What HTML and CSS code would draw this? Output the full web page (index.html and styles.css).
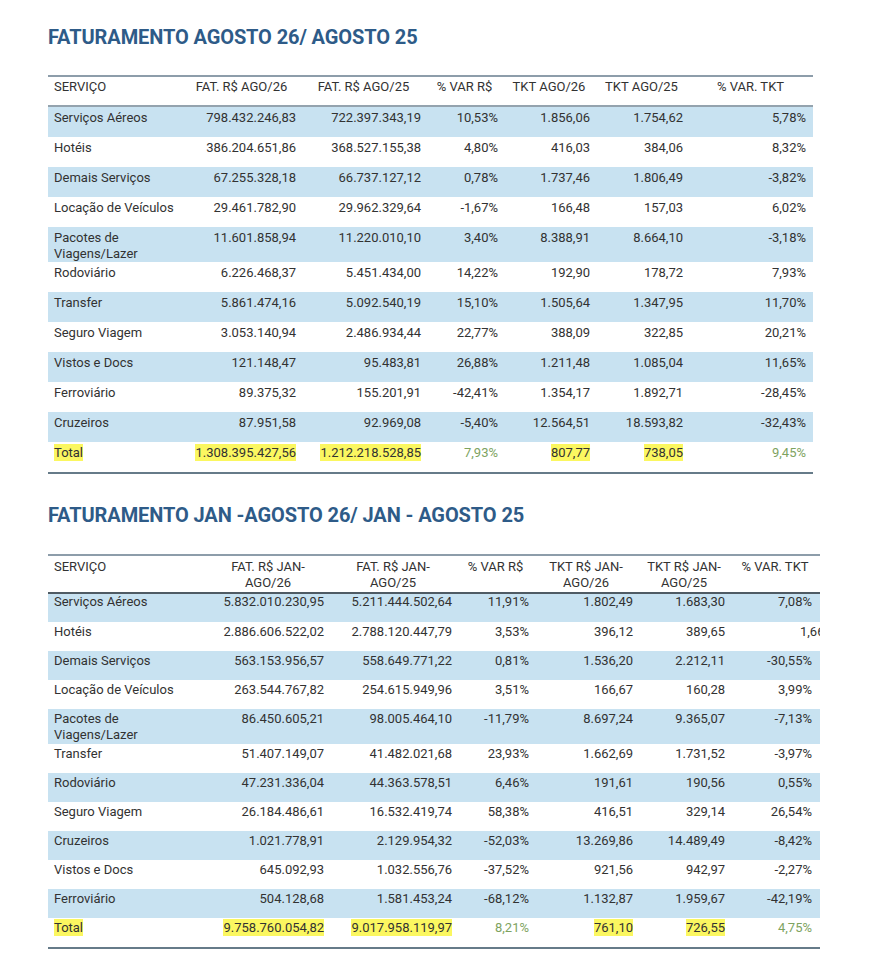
FILE: index.html
```html
<!DOCTYPE html>
<html lang="pt-BR">
<head>
<meta charset="utf-8">
<title>Faturamento</title>
<link rel="stylesheet" href="styles.css">
</head>
<body>
<main class="page">
  <section class="report report-month">
    <h1 class="title">FATURAMENTO AGOSTO 26/ AGOSTO 25</h1>
    <table class="grid grid-month">
      <colgroup>
        <col class="w-134"><col class="w-119"><col class="w-125"><col class="w-77"><col class="w-92"><col class="w-93"><col class="w-125">
      </colgroup>
      <thead>
        <tr><th class="lbl">SERVIÇO</th><th>FAT. R$ AGO/26</th><th>FAT. R$ AGO/25</th><th>% VAR R$</th><th>TKT AGO/26</th><th>TKT AGO/25</th><th>% VAR. TKT</th></tr>
      </thead>
      <tbody>
        <tr class="alt"><td class="lbl">Serviços Aéreos</td><td>798.432.246,83</td><td>722.397.343,19</td><td>10,53%</td><td>1.856,06</td><td>1.754,62</td><td>5,78%</td></tr>
        <tr><td class="lbl">Hotéis</td><td>386.204.651,86</td><td>368.527.155,38</td><td>4,80%</td><td>416,03</td><td>384,06</td><td>8,32%</td></tr>
        <tr class="alt"><td class="lbl">Demais Serviços</td><td>67.255.328,18</td><td>66.737.127,12</td><td>0,78%</td><td>1.737,46</td><td>1.806,49</td><td>-3,82%</td></tr>
        <tr><td class="lbl">Locação de Veículos</td><td>29.461.782,90</td><td>29.962.329,64</td><td>-1,67%</td><td>166,48</td><td>157,03</td><td>6,02%</td></tr>
        <tr class="alt"><td class="lbl">Pacotes de<br>Viagens/Lazer</td><td>11.601.858,94</td><td>11.220.010,10</td><td>3,40%</td><td>8.388,91</td><td>8.664,10</td><td>-3,18%</td></tr>
        <tr><td class="lbl">Rodoviário</td><td>6.226.468,37</td><td>5.451.434,00</td><td>14,22%</td><td>192,90</td><td>178,72</td><td>7,93%</td></tr>
        <tr class="alt"><td class="lbl">Transfer</td><td>5.861.474,16</td><td>5.092.540,19</td><td>15,10%</td><td>1.505,64</td><td>1.347,95</td><td>11,70%</td></tr>
        <tr><td class="lbl">Seguro Viagem</td><td>3.053.140,94</td><td>2.486.934,44</td><td>22,77%</td><td>388,09</td><td>322,85</td><td>20,21%</td></tr>
        <tr class="alt"><td class="lbl">Vistos e Docs</td><td>121.148,47</td><td>95.483,81</td><td>26,88%</td><td>1.211,48</td><td>1.085,04</td><td>11,65%</td></tr>
        <tr><td class="lbl">Ferroviário</td><td>89.375,32</td><td>155.201,91</td><td>-42,41%</td><td>1.354,17</td><td>1.892,71</td><td>-28,45%</td></tr>
        <tr class="alt"><td class="lbl">Cruzeiros</td><td>87.951,58</td><td>92.969,08</td><td>-5,40%</td><td>12.564,51</td><td>18.593,82</td><td>-32,43%</td></tr>
        <tr class="total"><td class="lbl"><span class="hl">Total</span></td><td><span class="hl">1.308.395.427,56</span></td><td><span class="hl">1.212.218.528,85</span></td><td class="pct">7,93%</td><td><span class="hl">807,77</span></td><td><span class="hl">738,05</span></td><td class="pct">9,45%</td></tr>
      </tbody>
    </table>
  </section>

  <section class="report report-ytd">
    <h1 class="title">FATURAMENTO JAN -AGOSTO 26/ JAN - AGOSTO 25</h1>
    <table class="grid grid-ytd">
      <colgroup>
        <col class="w-159"><col class="w-122"><col class="w-128"><col class="w-77"><col class="w-104"><col class="w-92"><col class="w-90">
      </colgroup>
      <thead>
        <tr><th class="lbl">SERVIÇO</th><th>FAT. R$ JAN-<br>AGO/26</th><th>FAT. R$ JAN-<br>AGO/25</th><th>% VAR R$</th><th>TKT R$ JAN-<br>AGO/26</th><th>TKT R$ JAN-<br>AGO/25</th><th>% VAR. TKT</th></tr>
      </thead>
      <tbody>
        <tr class="alt"><td class="lbl">Serviços Aéreos</td><td>5.832.010.230,95</td><td>5.211.444.502,64</td><td>11,91%</td><td>1.802,49</td><td>1.683,30</td><td>7,08%</td></tr>
        <tr><td class="lbl">Hotéis</td><td>2.886.606.522,02</td><td>2.788.120.447,79</td><td>3,53%</td><td>396,12</td><td>389,65</td><td class="cut"><div class="clip">1,66%</div></td></tr>
        <tr class="alt"><td class="lbl">Demais Serviços</td><td>563.153.956,57</td><td>558.649.771,22</td><td>0,81%</td><td>1.536,20</td><td>2.212,11</td><td>-30,55%</td></tr>
        <tr><td class="lbl">Locação de Veículos</td><td>263.544.767,82</td><td>254.615.949,96</td><td>3,51%</td><td>166,67</td><td>160,28</td><td>3,99%</td></tr>
        <tr class="alt"><td class="lbl">Pacotes de<br>Viagens/Lazer</td><td>86.450.605,21</td><td>98.005.464,10</td><td>-11,79%</td><td>8.697,24</td><td>9.365,07</td><td>-7,13%</td></tr>
        <tr><td class="lbl">Transfer</td><td>51.407.149,07</td><td>41.482.021,68</td><td>23,93%</td><td>1.662,69</td><td>1.731,52</td><td>-3,97%</td></tr>
        <tr class="alt"><td class="lbl">Rodoviário</td><td>47.231.336,04</td><td>44.363.578,51</td><td>6,46%</td><td>191,61</td><td>190,56</td><td>0,55%</td></tr>
        <tr><td class="lbl">Seguro Viagem</td><td>26.184.486,61</td><td>16.532.419,74</td><td>58,38%</td><td>416,51</td><td>329,14</td><td>26,54%</td></tr>
        <tr class="alt"><td class="lbl">Cruzeiros</td><td>1.021.778,91</td><td>2.129.954,32</td><td>-52,03%</td><td>13.269,86</td><td>14.489,49</td><td>-8,42%</td></tr>
        <tr><td class="lbl">Vistos e Docs</td><td>645.092,93</td><td>1.032.556,76</td><td>-37,52%</td><td>921,56</td><td>942,97</td><td>-2,27%</td></tr>
        <tr class="alt"><td class="lbl">Ferroviário</td><td>504.128,68</td><td>1.581.453,24</td><td>-68,12%</td><td>1.132,87</td><td>1.959,67</td><td>-42,19%</td></tr>
        <tr class="total"><td class="lbl"><span class="hl">Total</span></td><td><span class="hl">9.758.760.054,82</span></td><td><span class="hl">9.017.958.119,97</span></td><td class="pct">8,21%</td><td><span class="hl">761,10</span></td><td><span class="hl">726,55</span></td><td class="pct">4,75%</td></tr>
      </tbody>
    </table>
  </section>
</main>
</body>
</html>
```

FILE: styles.css
```css
* { box-sizing: border-box; }

html, body {
  margin: 0;
  padding: 0;
  background: #ffffff;
}

body {
  font-family: Roboto, "Liberation Sans", Arial, sans-serif;
  color: #323232;
}

.page {
  padding: 25px 0 0 48px;
}

.title {
  margin: 0;
  font-size: 20px;
  line-height: 24px;
  font-weight: 700;
  color: #2e5b88;
  letter-spacing: -0.1px;
}

.report-month .title { margin-bottom: 26px; }
.report-ytd { margin-top: 29px; }
.report-ytd .title { margin-bottom: 27px; }

.grid {
  border-collapse: collapse;
  table-layout: fixed;
  font-size: 13px;
  line-height: 16px;
}

.grid-month { width: 765px; }
.grid-ytd { width: 772px; }

.w-134 { width: 134px; }
.w-119 { width: 119px; }
.w-125 { width: 125px; }
.w-77 { width: 77px; }
.w-92 { width: 92px; }
.w-93 { width: 93px; }
.w-159 { width: 159px; }
.w-122 { width: 122px; }
.w-128 { width: 128px; }
.w-104 { width: 104px; }
.w-90 { width: 90px; }

.grid thead tr {
  border-top: 2px solid #8d9daa;
}

.grid-month thead tr { border-bottom: 2px solid #94a3ae; height: 30px; }
.grid-ytd thead tr { border-bottom: 2px solid #4f5b64; }

.grid th {
  font-weight: 400;
  text-align: center;
  vertical-align: top;
  padding: 2px 4px 2px 4px;
  white-space: nowrap;
}

.grid-ytd th { padding-top: 3px; padding-bottom: 1px; }

.grid th.lbl,
.grid td.lbl {
  text-align: left;
  padding-left: 6px;
}

.grid td {
  text-align: right;
  vertical-align: top;
  padding: 2px 5px 1px 4px;
  white-space: nowrap;
}

.grid-month td { padding-top: 3px; padding-bottom: 0; }
.grid-ytd tbody tr:first-child td { padding-top: 0; }

.grid td:last-child { padding-right: 7px; }
.grid-ytd td:last-child { padding-right: 8px; }

.grid-month tbody tr { height: 30px; }
.grid-month tbody tr:first-child { height: 31px; }
.grid-ytd tbody tr { height: 29px; }

.grid tr.alt { background: #c8e2f1; }

.grid tr.total { border-bottom: 2px solid #667b89; }
.grid-month tr.total { height: 31px; }
.grid-ytd tr.total { height: 30px; }

.hl {
  background: #fbf760;
  padding: 1px 0;
}

.grid td.pct { color: #7ea35f; }

.grid td.cut { padding: 2px 0 1px 0; }

.clip {
  overflow: hidden;
  white-space: nowrap;
  text-align: left;
  padding-left: 70px;
}
```
